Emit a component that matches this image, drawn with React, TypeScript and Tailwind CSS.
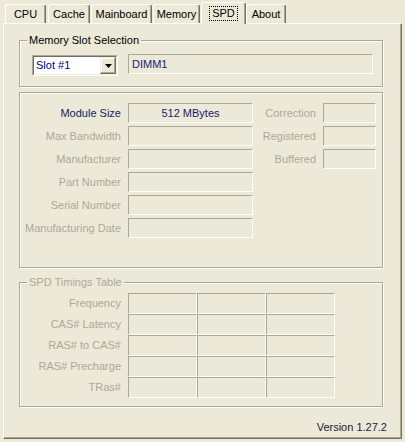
import React from 'react';

const sunken = 'border border-t-[#ACA899] border-l-[#ACA899] border-r-white border-b-white';
const etched = 'border border-[#ACA899] shadow-[inset_1px_1px_0_#fff,1px_1px_0_#fff]';

function Tab({ label, width, ml, active }: { label: string; width: string; ml: string; active?: boolean }) {
  if (active) {
    return (
      <div
        className={`${width} ${ml} relative z-10 -mb-px h-[22px] bg-[#ECE9D8] border-t border-l border-r border-t-white border-l-white border-r-[#716F64] rounded-t-[3px] shadow-[inset_-1px_0_0_#ACA899] flex justify-center pt-[3px]`}
      >
        <span className="h-[15px] px-[2px] leading-[13px] border border-dotted border-black">{label}</span>
      </div>
    );
  }
  return (
    <div
      className={`${width} ${ml} h-[19px] border-t border-l border-r border-t-white border-l-white border-r-[#716F64] rounded-t-[3px] shadow-[inset_-1px_0_0_#ACA899] flex items-center justify-center leading-none`}
    >
      {label}
    </div>
  );
}

function Group({ title, muted, className, children }: { title?: string; muted?: boolean; className: string; children: React.ReactNode }) {
  return (
    <div className={`relative ml-[15px] w-[364px] ${etched} ${className}`}>
      {title && (
        <span className={`absolute left-[7px] -top-[8px] px-[2px] bg-[#ECE9D8] leading-[14px] ${muted ? 'text-[#ACA899]' : ''}`}>{title}</span>
      )}
      {children}
    </div>
  );
}

const leftRows = ['Module Size', 'Max Bandwidth', 'Manufacturer', 'Part Number', 'Serial Number', 'Manufacturing Date'];
const rightRows = ['Correction', 'Registered', 'Buffered'];
const timings = ['Frequency', 'CAS# Latency', 'RAS# to CAS#', 'RAS# Precharge', 'TRas#'];

export default function App() {
  return (
    <div className="w-[405px] h-[442px] bg-[#ECE9D8] text-[11px] text-black font-['Tahoma','Liberation_Sans',sans-serif] overflow-hidden">
      {/* Tabs */}
      <div className="h-[23px] flex items-end">
        <Tab label="CPU" width="w-[41px]" ml="ml-[5px]" />
        <Tab label="Cache" width="w-[42px]" ml="ml-[2px]" />
        <Tab label="Mainboard" width="w-[61px]" ml="ml-[1px]" />
        <Tab label="Memory" width="w-[47px]" ml="ml-[1px]" />
        <Tab label="SPD" width="w-[45px]" ml="ml-[1px]" active />
        <Tab label="About" width="w-[40px]" ml="ml-0" />
      </div>

      {/* Panel */}
      <div className="ml-[3px] w-[399px] h-[416px] border border-t-white border-l-white border-r-[#716F64] border-b-[#716F64] shadow-[inset_-1px_-1px_0_#ACA899] pt-[16px]">
        <Group title="Memory Slot Selection" className="h-[47px] flex items-start pt-[14px]">
          {/* Combobox */}
          <div className="ml-[12px] w-[86px] h-[21px] border border-t-[#ACA899] border-l-[#ACA899] border-r-white border-b-white">
            <div className="h-full border border-t-[#716F64] border-l-[#716F64] border-r-[#F1EFE2] border-b-[#F1EFE2] bg-white flex items-center">
              <span className="flex-1 pl-[2px] text-[#000080] leading-none">Slot #1</span>
              <div className="w-[16px] h-full bg-[#ECE9D8] border border-t-[#F1EFE2] border-l-[#F1EFE2] border-r-[#716F64] border-b-[#716F64] shadow-[inset_-1px_-1px_0_#ACA899,inset_1px_1px_0_#fff] flex items-center justify-center">
                <svg width="7" height="4" viewBox="0 0 7 4">
                  <path d="M0 0h7L3.5 4z" fill="#000" />
                </svg>
              </div>
            </div>
          </div>
          <div className={`ml-[10px] -mt-[1px] w-[245px] h-[20px] ${sunken} flex items-center pl-[3px] text-[#20207A] leading-none`}>DIMM1</div>
        </Group>

        <Group className="mt-[5px] h-[176px] pt-[10px]">
          <div className="flex flex-col gap-[3px]">
            {leftRows.map((l, i) => (
              <div key={l} className="flex items-center h-[20px]">
                <span className={`w-[101px] text-right leading-none ${i === 0 ? 'text-[#0F1F66]' : 'text-[#ACA899]'}`}>{l}</span>
                <div className={`ml-[7px] w-[125px] h-[20px] ${sunken} flex items-center justify-center leading-none text-[#1A1A6E]`}>
                  {i === 0 ? '512 MBytes' : ''}
                </div>
                {rightRows[i] && (
                  <>
                    <span className="w-[63px] text-right leading-none text-[#ACA899]">{rightRows[i]}</span>
                    <div className={`ml-[7px] w-[53px] h-[20px] ${sunken}`} />
                  </>
                )}
              </div>
            ))}
          </div>
        </Group>

        <Group title="SPD Timings Table" muted className="mt-[14px] h-[125px] pt-[10px]">
          <div className="flex flex-col">
            {timings.map((t) => (
              <div key={t} className="flex items-center h-[21px]">
                <span className="w-[101px] text-right leading-none text-[#ACA899]">{t}</span>
                <div className="ml-[7px] flex">
                  <div className={`w-[69px] h-[21px] ${sunken}`} />
                  <div className={`w-[69px] h-[21px] ${sunken}`} />
                  <div className={`w-[69px] h-[21px] ${sunken}`} />
                </div>
              </div>
            ))}
          </div>
        </Group>

        <div className="mt-[13px] pr-[14px] text-right leading-[14px] text-[#1A1A3A]">Version 1.27.2</div>
      </div>
    </div>
  );
}
